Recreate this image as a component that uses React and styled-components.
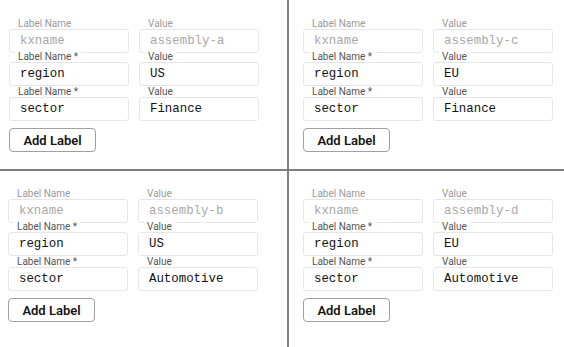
import React from 'react';
import styled, { createGlobalStyle } from 'styled-components';

const GlobalStyle = createGlobalStyle`
  html, body {
    margin: 0;
    padding: 0;
    background: #ffffff;
  }
  body {
    font-family: Roboto, "Liberation Sans", sans-serif;
  }
`;

const Board = styled.div`
  display: grid;
  grid-template-columns: 289px 1fr;
  grid-template-rows: 171px 176px;
  width: 564px;
  height: 347px;
  overflow: hidden;
`;

const Quadrant = styled.section`
  box-sizing: border-box;
  padding: ${({ $top }) => $top}px 0 0 ${({ $left }) => $left}px;
  border-right: ${({ $right }) => ($right ? '2px solid #808080' : 'none')};
  border-bottom: ${({ $bottom }) => ($bottom ? '2px solid #808080' : 'none')};
  display: flex;
  flex-direction: column;
`;

const Row = styled.div`
  display: flex;
  gap: 10px;
  margin-bottom: ${({ $after }) => $after}px;
`;

const Field = styled.div`
  position: relative;
  width: 120px;
`;

const FieldLabel = styled.label`
  position: absolute;
  top: -10px;
  left: 6px;
  padding: 0 3px;
  background: #ffffff;
  font-family: Roboto, "Liberation Sans", sans-serif;
  font-size: 10px;
  line-height: 10px;
  color: ${({ $muted }) => ($muted ? '#9a9a9a' : '#555555')};
  white-space: nowrap;
`;

const Input = styled.input`
  box-sizing: border-box;
  display: block;
  width: 120px;
  height: 24px;
  margin: 0;
  padding: 0 10px;
  border: 1px solid #e6e6e6;
  border-radius: 3px;
  background: #ffffff;
  font-family: "Liberation Mono", "Courier New", monospace;
  font-size: 12.4px;
  color: ${({ $muted }) => ($muted ? '#a8a8a8' : '#111111')};
  outline: none;
`;

const AddButton = styled.button`
  box-sizing: border-box;
  width: 87px;
  height: 24px;
  margin: 0;
  padding: 0;
  border: 1px solid #a0a0a0;
  border-radius: 4px;
  background: #ffffff;
  font-family: Roboto, "Liberation Sans", sans-serif;
  font-size: 13px;
  font-weight: 600;
  color: #151515;
  cursor: pointer;
`;

const groups = [
  { id: 'a', region: 'US', sector: 'Finance', top: 29, left: 9, right: true, bottom: true },
  { id: 'c', region: 'EU', sector: 'Finance', top: 29, left: 14, right: false, bottom: true },
  { id: 'b', region: 'US', sector: 'Automotive', top: 28, left: 8, right: true, bottom: false },
  { id: 'd', region: 'EU', sector: 'Automotive', top: 28, left: 14, right: false, bottom: false },
];

const LabelRow = ({ name, value, muted, required, after }) => (
  <Row $after={after}>
    <Field>
      <FieldLabel $muted={muted}>Label Name{required ? ' *' : ''}</FieldLabel>
      <Input $muted={muted} value={name} readOnly />
    </Field>
    <Field>
      <FieldLabel $muted={muted}>Value</FieldLabel>
      <Input $muted={muted} value={value} readOnly />
    </Field>
  </Row>
);

const App = () => (
  <>
    <GlobalStyle />
    <Board>
      {groups.map((g) => (
        <Quadrant key={g.id} $top={g.top} $left={g.left} $right={g.right} $bottom={g.bottom}>
          <LabelRow name="kxname" value={`assembly-${g.id}`} muted after={9} />
          <LabelRow name="region" value={g.region} required after={11} />
          <LabelRow name="sector" value={g.sector} required after={7} />
          <div>
            <AddButton type="button">Add Label</AddButton>
          </div>
        </Quadrant>
      ))}
    </Board>
  </>
);

export default App;
